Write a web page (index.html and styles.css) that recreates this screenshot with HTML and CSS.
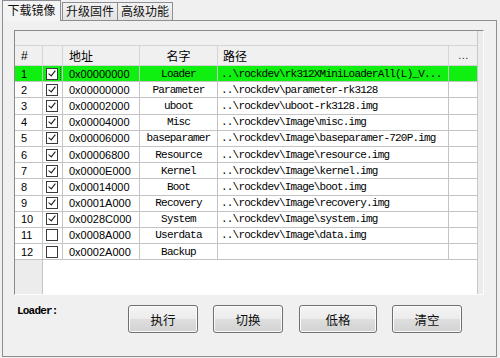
FILE: index.html
```html
<!DOCTYPE html>
<html>
<head>
<meta charset="utf-8">
<link rel="stylesheet" href="styles.css">
</head>
<body>
<div class="win">
  <div class="tabs">
    <div class="tab active">下载镜像</div>
    <div class="tab t2">升级固件</div>
    <div class="tab t3">高级功能</div>
  </div>
  <div class="panel">
    <div class="list">
      <div class="main">
        <div class="band"></div>
        <div class="row head">
          <div class="c num">#</div><div class="c cb"></div><div class="c addr">地址</div><div class="c name">名字</div><div class="c path">路径</div><div class="c more">. . .</div>
        </div>
        <div class="row sel">
          <div class="c num">1</div><div class="c cb focus"><span class="box on"></span></div><div class="c addr">0x00000000</div><div class="c name">Loader</div><div class="c path">..\rockdev\rk312XMiniLoaderAll(L)_V...</div><div class="c more"></div>
        </div>
        <div class="row">
          <div class="c num">2</div><div class="c cb"><span class="box on"></span></div><div class="c addr">0x00000000</div><div class="c name">Parameter</div><div class="c path">..\rockdev\parameter-rk3128</div><div class="c more"></div>
        </div>
        <div class="row">
          <div class="c num">3</div><div class="c cb"><span class="box on"></span></div><div class="c addr">0x00002000</div><div class="c name">uboot</div><div class="c path">..\rockdev\uboot-rk3128.img</div><div class="c more"></div>
        </div>
        <div class="row">
          <div class="c num">4</div><div class="c cb"><span class="box on"></span></div><div class="c addr">0x00004000</div><div class="c name">Misc</div><div class="c path">..\rockdev\Image\misc.img</div><div class="c more"></div>
        </div>
        <div class="row">
          <div class="c num">5</div><div class="c cb"><span class="box on"></span></div><div class="c addr">0x00006000</div><div class="c name">baseparamer</div><div class="c path">..\rockdev\Image\baseparamer-720P.img</div><div class="c more"></div>
        </div>
        <div class="row">
          <div class="c num">6</div><div class="c cb"><span class="box on"></span></div><div class="c addr">0x00006800</div><div class="c name">Resource</div><div class="c path">..\rockdev\Image\resource.img</div><div class="c more"></div>
        </div>
        <div class="row">
          <div class="c num">7</div><div class="c cb"><span class="box on"></span></div><div class="c addr">0x0000E000</div><div class="c name">Kernel</div><div class="c path">..\rockdev\Image\kernel.img</div><div class="c more"></div>
        </div>
        <div class="row">
          <div class="c num">8</div><div class="c cb"><span class="box on"></span></div><div class="c addr">0x00014000</div><div class="c name">Boot</div><div class="c path">..\rockdev\Image\boot.img</div><div class="c more"></div>
        </div>
        <div class="row">
          <div class="c num">9</div><div class="c cb"><span class="box on"></span></div><div class="c addr">0x0001A000</div><div class="c name">Recovery</div><div class="c path">..\rockdev\Image\recovery.img</div><div class="c more"></div>
        </div>
        <div class="row">
          <div class="c num">10</div><div class="c cb"><span class="box on"></span></div><div class="c addr">0x0028C000</div><div class="c name">System</div><div class="c path">..\rockdev\Image\system.img</div><div class="c more"></div>
        </div>
        <div class="row">
          <div class="c num">11</div><div class="c cb"><span class="box"></span></div><div class="c addr">0x0008A000</div><div class="c name">Userdata</div><div class="c path">..\rockdev\Image\data.img</div><div class="c more"></div>
        </div>
        <div class="row">
          <div class="c num">12</div><div class="c cb"><span class="box"></span></div><div class="c addr">0x0002A000</div><div class="c name">Backup</div><div class="c path"></div><div class="c more"></div>
        </div>
        <div class="filler"><div class="fnum"></div></div>
      </div>
      <div class="strip"></div>
    </div>
    <div class="footer">
      <div class="label">Loader:</div>
      <button class="btn">执行</button>
      <button class="btn">切换</button>
      <button class="btn wide">低格</button>
      <button class="btn">清空</button>
    </div>
  </div>
</div>
</body>
</html>
```

FILE: styles.css
```css
* { box-sizing: border-box; }
html, body { margin: 0; padding: 0; background: #f0f0f0; }
body { font-family: "Noto Sans CJK SC", "Liberation Sans", sans-serif; font-size: 12px; color: #000; }

.win { width: 500px; height: 358px; background: #f0f0f0; padding-left: 2px; }

.tabs { display: flex; align-items: flex-end; height: 20px; position: relative; z-index: 2; }
.tab {
  height: 18px; line-height: 16px; padding: 0; text-align: center;
  border: 1px solid #8c8e94; border-bottom: none;
  background: linear-gradient(#f2f2f2, #e3e3e3);
  font-size: 12px; color: #111; white-space: nowrap;
  margin-left: -1px;
}
.tab.active {
  height: 21px; margin-bottom: -1px; margin-left: 0;
  background: #f4f4f4; width: 59px; line-height: 18px;
  border-color: #8c8e94;
}
.tab.t2 { width: 56px; margin-left: 1px; }
.tab.t3 { width: 56px; }

.panel {
  width: 495px; height: 337px;
  border: 1px solid #8c8e94;
  background: #f0f0f0;
  padding: 9px 0 0 11px;
}

.list {
  display: flex; width: 470px; height: 265px;
  border-top: 1px solid #8a8a8a; border-left: 1px solid #8a8a8a;
  border-right: 1px solid #fdfdfd; border-bottom: 1px solid #fdfdfd;
  background: #f0f0f0;
}
.main { width: 463px; display: flex; flex-direction: column; border-right: 1px solid #c8c8c8; }
.strip { flex: 1; background: #ececec; }

.band { height: 15px; background: #f0f0f0; border-bottom: 1px solid #d4d4d4; }

.row {
  display: grid; grid-template-columns: 28px 20px 77px 78px 231px 28px;
  height: 16.2px; background: #fff;
}
.row.head { height: 20px; background: #f0f0f0; }
.c {
  border-right: 1px solid #c4c4c4; border-bottom: 1px solid #c4c4c4;
  display: flex; align-items: center; overflow: hidden; white-space: nowrap;
  font-family: "Liberation Sans", sans-serif; font-size: 11px;
}
.c.more { border-right: none; }
.head .c { border-color: #d4d4d4; font-family: "Noto Sans CJK SC", sans-serif; font-size: 12px; }
.head .c.num { font-family: "Liberation Sans", sans-serif; font-size: 12px; }
.head .c.more { justify-content: center; font-size: 9px; letter-spacing: -0.5px; color: #333; }
.num { padding-left: 6px; }
.addr { padding-left: 6px; }
.name { justify-content: center; }
.path { padding-left: 3px; }
.row:not(.head) .name, .row:not(.head) .path {
  font-family: "Liberation Mono", monospace; font-size: 11px; letter-spacing: -0.8px;
}
.head .name { justify-content: center; }
.head .path { padding-left: 5px; }

.row.sel { background: #10f010; }
.cb { padding-left: 3px; }
.cb.focus { position: relative; }
.cb.focus::after {
  content: ""; position: absolute; right: 1px; top: 1px; bottom: 1px;
  border-right: 1px dotted #333;
}
.box {
  width: 12px; height: 12px; background: #fff;
  border: 1px solid #3a3a3a;
  position: relative;
}
.box.on::after {
  content: ""; position: absolute; left: 3px; top: 0px;
  width: 3px; height: 6px;
  border-right: 1.6px solid #111; border-bottom: 1.6px solid #111;
  transform: rotate(38deg);
}

.filler { flex: 1; background: #fff; display: flex; }
.fnum { width: 28px; background: #ececec; border-right: 1px solid #c4c4c4; }

.footer { display: flex; align-items: flex-start; margin-top: 10px; padding-left: 3px; }
.label {
  width: 111px; font-family: "Liberation Mono", monospace; font-size: 11px; font-weight: bold;
  letter-spacing: -0.8px; line-height: 12px; padding-top: 0px;
}
.btn {
  width: 70px; height: 28px; margin: 0 15px 0 0; padding: 0;
  border: 1px solid #707070; border-radius: 3px;
  background: linear-gradient(#f4f4f4 0%, #ececec 48%, #dedede 52%, #d2d2d2 100%);
  box-shadow: inset 0 0 0 1px #fbfbfb;
  font-family: "Noto Sans CJK SC", sans-serif; font-size: 12.5px; color: #111;
}
.btn.wide { width: 78px; margin-left: 1px; }
```
